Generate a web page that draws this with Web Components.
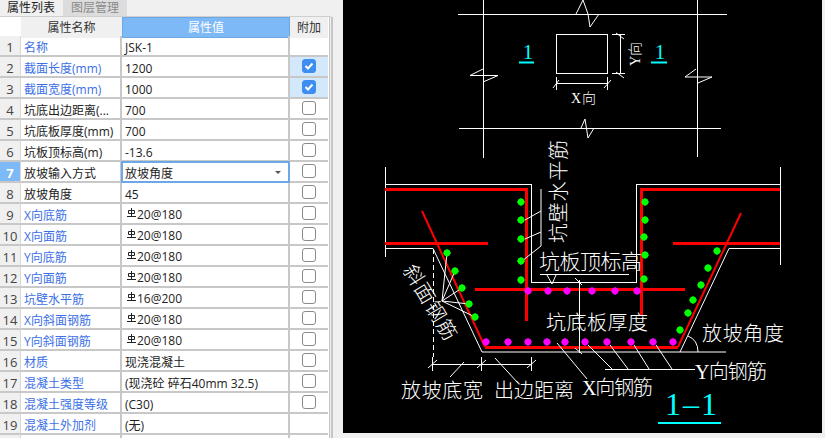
<!DOCTYPE html>
<html>
<head>
<meta charset="utf-8">
<title>属性列表</title>
<style>
    html, body { margin: 0; padding: 0; background: #f0f0f0; overflow: hidden; }
</style>
</head>
<body>
<app-shell>
    <prop-panel slot="panel">
        <prop-row n="1" link check="none"><span slot="name">名称</span>JSK-1</prop-row>
        <prop-row n="2" link check="on"><span slot="name">截面长度(mm)</span>1200</prop-row>
        <prop-row n="3" link check="on"><span slot="name">截面宽度(mm)</span>1000</prop-row>
        <prop-row n="4"><span slot="name">坑底出边距离(...</span>700</prop-row>
        <prop-row n="5"><span slot="name">坑底板厚度(mm)</span>700</prop-row>
        <prop-row n="6"><span slot="name">坑板顶标高(m)</span>-13.6</prop-row>
        <prop-row n="7" active><span slot="name">放坡输入方式</span>放坡角度</prop-row>
        <prop-row n="8"><span slot="name">放坡角度</span>45</prop-row>
        <prop-row n="9" link rebar><span slot="name">X向底筋</span>20@180</prop-row>
        <prop-row n="10" link rebar><span slot="name">X向面筋</span>20@180</prop-row>
        <prop-row n="11" link rebar><span slot="name">Y向底筋</span>20@180</prop-row>
        <prop-row n="12" link rebar><span slot="name">Y向面筋</span>20@180</prop-row>
        <prop-row n="13" link rebar><span slot="name">坑壁水平筋</span>16@200</prop-row>
        <prop-row n="14" link rebar><span slot="name">X向斜面钢筋</span>20@180</prop-row>
        <prop-row n="15" link rebar><span slot="name">Y向斜面钢筋</span>20@180</prop-row>
        <prop-row n="16" link><span slot="name">材质</span>现浇混凝土</prop-row>
        <prop-row n="17" link><span slot="name">混凝土类型</span>(现浇砼 碎石40mm 32.5)</prop-row>
        <prop-row n="18" link><span slot="name">混凝土强度等级</span>(C30)</prop-row>
        <prop-row n="19" link check="none"><span slot="name">混凝土外加剂</span>(无)</prop-row>
        <prop-row check="none"></prop-row>
    </prop-panel>
    <cad-view slot="view"></cad-view>
</app-shell>

<script>
class AppShell extends HTMLElement {
    constructor() {
        super();
        this.attachShadow({ mode: 'open' });
        this.shadowRoot.innerHTML = `
        <style>
            :host { display: flex; width: 825px; height: 438px; overflow: hidden; background: #f0f0f0; }
            .main { flex: 0 0 auto; margin-left: 0; }
        </style>
        <slot name="panel"></slot>
        <div class="main"><slot name="view"></slot></div>
        `;
    }
}

class PropPanel extends HTMLElement {
    constructor() {
        super();
        this.attachShadow({ mode: 'open' });
        this.shadowRoot.innerHTML = `
        <style>
            :host {
                display: block;
                width: 343px;
                height: 438px;
                overflow: hidden;
                flex: none;
                background: #f0f0f0;
                font: 12px "Open Sans", "Noto Sans CJK SC", sans-serif;
                color: #222;
            }
            .tabs { display: flex; height: 16px; border-bottom: 1px solid #cfcfcf; width: 331px; overflow: hidden; }
            .tab { height: 16px; line-height: 15px; padding: 0 7px; width: 48px; overflow: visible; white-space: nowrap; }
            .tab.on { background: #f0f0f0; color: #222; }
            .tab.off { background: #dcdcdc; color: #8a8a8a; margin-left: 1px; padding: 0 8px; }
            .frame { width: 331px; border-right: 2px solid #c6c6c6; height: 421px; }
            .grid { width: 329px; border-right: 1px solid #c6c6c6; background: #fff; height: 421px; }
            .head {
                display: grid;
                grid-template-columns: 21px 101px 168px 38px;
                height: 19px;
                line-height: 21px;
                text-align: center;
            }
            .head div { background: #f0f0f0; color: #333; }
            .head .corner { background: #fff; }
            .head .sel { background: #7db8f7; color: #fff; border: 1px solid #6da8e6; line-height: 19px; box-sizing: border-box; }
        </style>
        <div class="tabs">
            <div class="tab on">属性列表</div>
            <div class="tab off">图层管理</div>
        </div>
        <div class="frame">
            <div class="grid">
                <div class="head">
                    <div class="corner"></div>
                    <div>属性名称</div>
                    <div class="sel">属性值</div>
                    <div>附加</div>
                </div>
                <slot></slot>
            </div>
        </div>
        `;
    }
}

class PropRow extends HTMLElement {
    constructor() {
        super();
        this.attachShadow({ mode: 'open' });
    }

    connectedCallback() {
        var check = this.getAttribute('check') || 'off';
        var box = '';
        if (check == 'on') {
            box = `<span class="box on"><svg width="10" height="10" viewBox="0 0 10 10"><path d="M1.5 5 L4 7.5 L8.5 2.5" fill="none" stroke="#fff" stroke-width="2"/></svg></span>`;
        } else if (check == 'off') {
            box = `<span class="box"></span>`;
        }

        // el simbolo de la barra de acero, dibujado porque no hay glifo
        var mark = this.hasAttribute('rebar') ? `<svg class="mark" width="9" height="9" viewBox="0 0 9 9"><path d="M4.5 0 V8 M1.5 2.5 H7.5 V5.5 H1.5 Z M0 8.5 H9" fill="none" stroke="#222" stroke-width="1"/></svg>` : '';

        this.shadowRoot.innerHTML = `
        <style>
            :host {
                display: grid;
                grid-template-columns: 21px 101px 168px 38px;
                height: 21px;
                box-sizing: border-box;
                line-height: 23px;
            }
            div { box-sizing: border-box; border-bottom: 2px solid #c8c8c8; height: 21px; white-space: nowrap; overflow: hidden; }
            .num { background: #f0f0f0; border-right: 1px solid #d8d8d8; text-align: center; color: #444; font-size: 13px; }
            .name { padding-left: 3px; border-right: 2px solid #c8c8c8; }
            .val { padding-left: 3px; border-right: 2px solid #c8c8c8; position: relative; }
            .add { display: flex; align-items: center; justify-content: center; padding-left: 0; }
            :host([link]) .name { color: #3b6fe6; }
            :host([active]) .num { background: #7db8f7; color: #fff; font-weight: bold; }
            :host([active]) .val { border: 2px solid #6da8e6; margin: -1px 0 -1px -1px; height: 22px; padding-left: 2px; line-height: 21px; width: 169px; position: relative; background: #fff; }
            :host([rebar]) .val { padding-left: 5px; line-height: 21px; }
            .mark { vertical-align: 2px; margin-right: 1px; }
            .arrow { position: absolute; right: 7px; top: 8px; width: 0; height: 0; border: 3px solid transparent; border-top: 3px solid #555; }
            .box { display: block; width: 14px; height: 14px; box-sizing: border-box; border: 1px solid #8a8a8a; border-radius: 3px; background: #fff; margin-top: -1px; }
            .box.on { background: #3d8ef0; border-color: #3d8ef0; display: flex; align-items: center; justify-content: center; }
            .add.sel { background: #d4e8fc; }
        </style>
        <div class="num">${this.getAttribute('n') || ''}</div>
        <div class="name"><slot name="name"></slot></div>
        <div class="val">${mark}<slot></slot>${this.hasAttribute('active') ? '<span class="arrow"></span>' : ''}</div>
        <div class="add${check == 'on' ? ' sel' : ''}">${box}</div>
        `;
    }
}

class CadView extends HTMLElement {
    constructor() {
        super();
        this.attachShadow({ mode: 'open' });
    }

    dots(list, color) {
        return list.map(p => `<circle cx="${p[0]}" cy="${p[1]}" r="3.4" fill="${color}"/><path d="M${p[0] - 4} ${p[1]} H${p[0] + 4} M${p[0]} ${p[1] - 4} V${p[1] + 4}" stroke="${color}" stroke-width="1"/>`).join('');
    }

    connectedCallback() {
        var green = [
            [521, 202], [521, 220], [521, 239], [521, 261], [521, 280],
            [645, 202], [645, 220], [644, 237], [645, 255], [644, 279],
            [447, 253], [455, 271], [462, 288], [469, 304], [475, 317],
            [717, 251], [708, 268], [701, 285], [693, 300], [688, 313], [680, 330]
        ];
        var pink = [
            [528, 291], [548, 291], [567, 291], [592, 291], [615, 291], [637, 291],
            [486, 342], [508, 342], [528, 342], [547, 342], [565, 342], [585, 342],
            [607, 342], [631, 342], [653, 342], [673, 342]
        ];

        // las coordenadas del dibujo son las de la pantalla, el svg empieza en x=343
        this.shadowRoot.innerHTML = `
        <style>
            :host { display: block; width: 479px; height: 433px; background: #000; overflow: hidden; }
            svg { display: block; }
            .w { fill: none; stroke: #fff; stroke-width: 1; shape-rendering: crispEdges; }
            .w2 { fill: none; stroke: #fff; stroke-width: 1; }
            .r { fill: none; stroke: #f00; stroke-width: 3; shape-rendering: crispEdges; }
            .r2 { fill: none; stroke: #f00; stroke-width: 2; }
            text { fill: #fff; font-family: "Noto Sans CJK SC", sans-serif; font-weight: 300; font-size: 20px; }
            .ser { font-family: "Liberation Serif", serif; }
            .c { fill: #0ff; font-family: "Liberation Serif", serif; }
        </style>
        <svg width="479" height="433" viewBox="343 0 479 433">
            <!-- vista en planta -->
            <path class="w" d="M457.5 14.5 H727 M459 128.5 H721 M483.5 0 V158 M697.5 0 V157"/>
            <path class="w2" d="M576 14 L583 0 L588 14 L590 27 L599 14 M581 128 L585 119 L588 138 L594 128"/>
            <path class="w2" d="M470 75.5 L483 69 M470 75.5 H498 L483 82 M685 77 L696 69 M685 77 H712 L698 83"/>
            <path class="w" d="M556.5 34.5 H607.5 V73.5 H556.5 Z"/>
            <path class="w" d="M556.5 77 V90 M607.5 77 V90 M556 83.5 H608 M612 34.5 H625 M612 73.5 H625 M620.5 34 V74"/>
            <path class="w2" d="M553 88 L559 80 M604 88 L611 80 M616 33 L624 39 M616 72 L624 78"/>
            <text style="font-size:14px" x="571" y="103" textLength="25"><tspan class="ser">X</tspan>向</text>
            <text style="font-size:14px" transform="translate(640 66) rotate(-90)" textLength="24"><tspan class="ser">Y</tspan>向</text>
            <text class="c" style="font-size:20px" x="523" y="59">1</text>
            <text class="c" style="font-size:20px" x="655" y="59">1</text>
            <path d="M519 62.5 H534 M651 62.5 H667" stroke="#0ff" stroke-width="2"/>

            <!-- seccion 1-1 -->
            <path class="w" d="M385.5 167 V257 M780.5 167 V265"/>
            <path class="w" d="M385 184.5 H531.5 V282.5 H636.5 V184.5 H780"/>
            <path class="w2" d="M385 248.5 H433 L482 352 H726 M729 248.5 L680 352 M729 248.5 H780"/>
            <path d="M433.5 249 V357" stroke="#fff" stroke-dasharray="5 3" shape-rendering="crispEdges"/>
            <path class="r" d="M385 189 H526.5 V321 M641.5 316 V189 H780 M385 243 H488 M673 243 H780 M475 289 H685"/>
            <path class="r" d="M485 347 H678"/>
            <path class="r2" d="M422 211 L485 347 M678 347 L741 213"/>

            <!-- cotas -->
            <path class="w" d="M432.5 357 V371 M481.5 357 V371 M531.5 357 V371 M432 364.5 H532"/>
            <path class="w2" d="M428 368 L437 360 M477 368 L486 360 M527 368 L536 360 M450 377 L464 362 M495 358 L518 383"/>
            <path class="w2" d="M541 189 V246 M525 220 L541 211 M525 239 L541 232 M522 261 L541 246"/>
            <path class="w" d="M540 274.5 H629 M579.5 280 V353 M605 369.5 H695"/>
            <path class="w2" d="M547 275 L552 284 L556 275 M575 278 L582 285 M575 348 L582 354"/>
            <path class="w2" d="M557 343 L587 379 M588 345 L612 369 M610 345 L628 369 M634 345 L649 369 M656 345 L672 369"/>
            <path class="w2" d="M688 336 Q698 340 698 352"/>
            <path class="w2" d="M442 301 L447 253 M442 301 L455 271 M442 301 L462 288 M442 301 L469 304 M442 301 L475 317"/>

            ${this.dots(green, '#0f0')}
            ${this.dots(pink, '#f0f')}

            <text transform="translate(566 243) rotate(-90)" textLength="103">坑壁水平筋</text>
            <text x="539" y="269" textLength="103" style="font-size:21px">坑板顶标高</text>
            <text transform="translate(402.6 270) rotate(59)" textLength="84">斜面钢筋</text>
            <text x="546" y="330" textLength="102">坑底板厚度</text>
            <text x="702" y="341" textLength="82">放坡角度</text>
            <text x="695" y="379" textLength="72"><tspan class="ser">Y</tspan>向钢筋</text>
            <text x="401" y="398" textLength="82">放坡底宽</text>
            <text x="494" y="398" textLength="80">出边距离</text>
            <text x="582" y="395" textLength="71"><tspan class="ser">X</tspan>向钢筋</text>
            <text class="c" style="font-size:32px" x="665" y="415" textLength="52">1–1</text>
            <path d="M658 423 H721" stroke="#0ff" stroke-width="2"/>
        </svg>
        `;
    }
}

window.customElements.define('app-shell', AppShell);
window.customElements.define('prop-panel', PropPanel);
window.customElements.define('prop-row', PropRow);
window.customElements.define('cad-view', CadView);
</script>
</body>
</html>
